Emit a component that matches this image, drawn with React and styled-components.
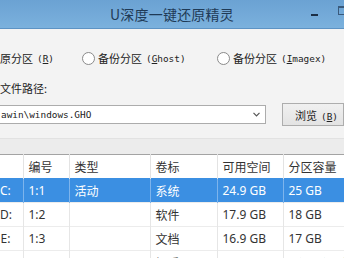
import React from 'react';
import styled, { createGlobalStyle } from 'styled-components';

const GlobalStyle = createGlobalStyle`
  html, body {
    margin: 0;
    padding: 0;
    width: 344px;
    height: 258px;
    overflow: hidden;
    background: #f3f3f3;
  }
  body {
    font-family: "Noto Sans CJK SC", "Noto Sans", sans-serif;
    color: #333;
  }
`;

const Window = styled.div`
  position: relative;
  display: flex;
  flex-direction: column;
  width: 344px;
  height: 258px;
  overflow: hidden;
  background: #f3f3f3;
`;

const TitleBar = styled.div`
  display: grid;
  grid-template-columns: 1fr auto 1fr;
  align-items: center;
  height: 28px;
  flex-shrink: 0;
  background: linear-gradient(#6ba2d3, #7bb1dd);
  border-bottom: 1px solid #5d93c4;
`;

const Title = styled.div`
  grid-column: 2;
  font-size: 14px;
  line-height: 28px;
  color: #1f3a56;
  letter-spacing: 0.2px;
`;

const Controls = styled.div`
  display: flex;
  justify-content: flex-end;
  align-items: center;
  gap: 20px;
  margin-right: -4px;
  height: 28px;
`;

const MinButton = styled.span`
  width: 7px;
  height: 2px;
  margin-top: 2px;
  background: #1c2f46;
`;

const MaxButton = styled.span`
  width: 8px;
  height: 6px;
  margin-top: -7px;
  border: 1px solid #3a5a7c;
  border-top-width: 2px;
`;

const Body = styled.div`
  display: flex;
  flex-direction: column;
  padding-top: 19px;
`;

const RadioRow = styled.div`
  display: grid;
  grid-template-columns: 82px 135px 1fr;
  height: 20px;
  align-items: center;
  font-size: 11px;
`;

const RadioItem = styled.label`
  display: flex;
  align-items: center;
  white-space: nowrap;
  color: #222;
`;

const RadioCircle = styled.span`
  width: 11px;
  height: 11px;
  border: 1px solid #8a8a8a;
  border-radius: 50%;
  background: #fff;
  margin-right: 3px;
  flex-shrink: 0;
`;

const Latin = styled.span`
  font-family: "DejaVu Sans Mono", monospace;
  font-size: 9.4px;
  margin-left: 4px;
  u {
    text-underline-offset: 1px;
  }
`;

const PathLabel = styled.div`
  margin-top: 12px;
  height: 16px;
  line-height: 16px;
  font-size: 11px;
  color: #222;
`;

const ComboRow = styled.div`
  display: flex;
  align-items: center;
  margin-top: 7px;
  height: 23px;
  gap: 16px;
`;

const Combo = styled.div`
  display: flex;
  align-items: center;
  justify-content: space-between;
  width: 276px;
  height: 19px;
  margin-left: -2px;
  padding-left: 2px;
  padding-right: 5px;
  box-sizing: border-box;
  border: 1px solid #acacac;
  background: #fff;
  font-family: "DejaVu Sans Mono", monospace;
  font-size: 9.4px;
  color: #222;
`;

const BrowseButton = styled.button`
  flex-shrink: 0;
  width: 62px;
  height: 23px;
  padding: 0 0 0 12px;
  text-align: left;
  border: 1px solid #adadad;
  background: linear-gradient(#f0f0f0, #e3e3e3);
  font-family: "Noto Sans CJK SC", sans-serif;
  font-size: 11px;
  color: #222;
  white-space: nowrap;
`;

const Band = styled.div`
  margin-top: 12px;
  height: 15px;
  border-top: 1px solid #e2e2e2;
  background: #ececec;
`;

const Table = styled.table`
  width: 344px;
  table-layout: fixed;
  border-collapse: collapse;
  background: #fff;
  border-top: 1px solid #a3a3a3;
  font-size: 12px;
`;

const HeadCell = styled.th`
  height: 23px;
  padding: 0 0 0 5px;
  text-align: left;
  font-weight: normal;
  color: #333;
  white-space: nowrap;
  overflow: hidden;
  border-left: 1px solid #e3e3e3;
  &:first-child {
    border-left: none;
  }
`;

const Row = styled.tr`
  background: ${p => (p.$selected ? '#3b8fe2' : '#fff')};
  color: ${p => (p.$selected ? '#fff' : '#333')};
  border-top: 1px solid ${p => (p.$selected ? '#3b8fe2' : '#ececec')};
`;

const Cell = styled.td`
  height: 23px;
  padding: 0 0 0 5px;
  white-space: nowrap;
  overflow: hidden;
  font-family: "Noto Sans", "Noto Sans CJK SC", sans-serif;
  border-left: 1px solid ${p => (p.$selected ? '#7db4ec' : '#e6e6e6')};
  &:first-child {
    border-left: none;
    text-align: right;
    padding: 0 12px 0 0;
  }
`;

const Watermark = styled.div`
  position: absolute;
  left: 278px;
  top: 253px;
  font-size: 17px;
  font-weight: bold;
  color: #2fa54c;
  letter-spacing: 2px;
  white-space: nowrap;
`;

const Chevron = () => (
  <svg width="7" height="5" viewBox="0 0 7 5">
    <path d="M0.5 0.8 L3.5 3.8 L6.5 0.8" fill="none" stroke="#555" strokeWidth="1.2" />
  </svg>
);

const rows = [
  ['C:', '1:1', '活动', '系统', '24.9 GB', '25 GB'],
  ['D:', '1:2', '', '软件', '17.9 GB', '18 GB'],
  ['E:', '1:3', '', '文档', '16.9 GB', '17 GB'],
  ['F:', '1:4', '', '娱乐', '4.4 GB', '5 GB'],
];

const widths = [23, 46, 81, 67, 66, 61];

const App = () => {
  return (
    <>
      <GlobalStyle />
      <Window>
        <TitleBar>
          <Title>U深度一键还原精灵</Title>
          <Controls>
            <MinButton />
            <MaxButton />
          </Controls>
        </TitleBar>
        <Body>
          <RadioRow>
            <RadioItem>
              原分区<Latin>(<u>R</u>)</Latin>
            </RadioItem>
            <RadioItem>
              <RadioCircle />
              备份分区<Latin>(<u>G</u>host)</Latin>
            </RadioItem>
            <RadioItem>
              <RadioCircle />
              备份分区<Latin>(<u>I</u>magex)</Latin>
            </RadioItem>
          </RadioRow>
          <PathLabel>文件路径:</PathLabel>
          <ComboRow>
            <Combo>
              <span>awin\windows.GHO</span>
              <Chevron />
            </Combo>
            <BrowseButton>
              浏览<Latin>(<u>B</u>)</Latin>
            </BrowseButton>
          </ComboRow>
          <Band />
          <Table>
            <colgroup>
              {widths.map((w, i) => (
                <col key={i} style={{ width: w }} />
              ))}
            </colgroup>
            <thead>
              <tr>
                <HeadCell />
                <HeadCell>编号</HeadCell>
                <HeadCell>类型</HeadCell>
                <HeadCell>卷标</HeadCell>
                <HeadCell>可用空间</HeadCell>
                <HeadCell>分区容量</HeadCell>
              </tr>
            </thead>
            <tbody>
              {rows.map((r, i) => (
                <Row key={i} $selected={i === 0}>
                  {r.map((c, j) => (
                    <Cell key={j} $selected={i === 0}>
                      {c}
                    </Cell>
                  ))}
                </Row>
              ))}
            </tbody>
          </Table>
        </Body>
        <Watermark>系统之家</Watermark>
      </Window>
    </>
  );
};

export default App;
